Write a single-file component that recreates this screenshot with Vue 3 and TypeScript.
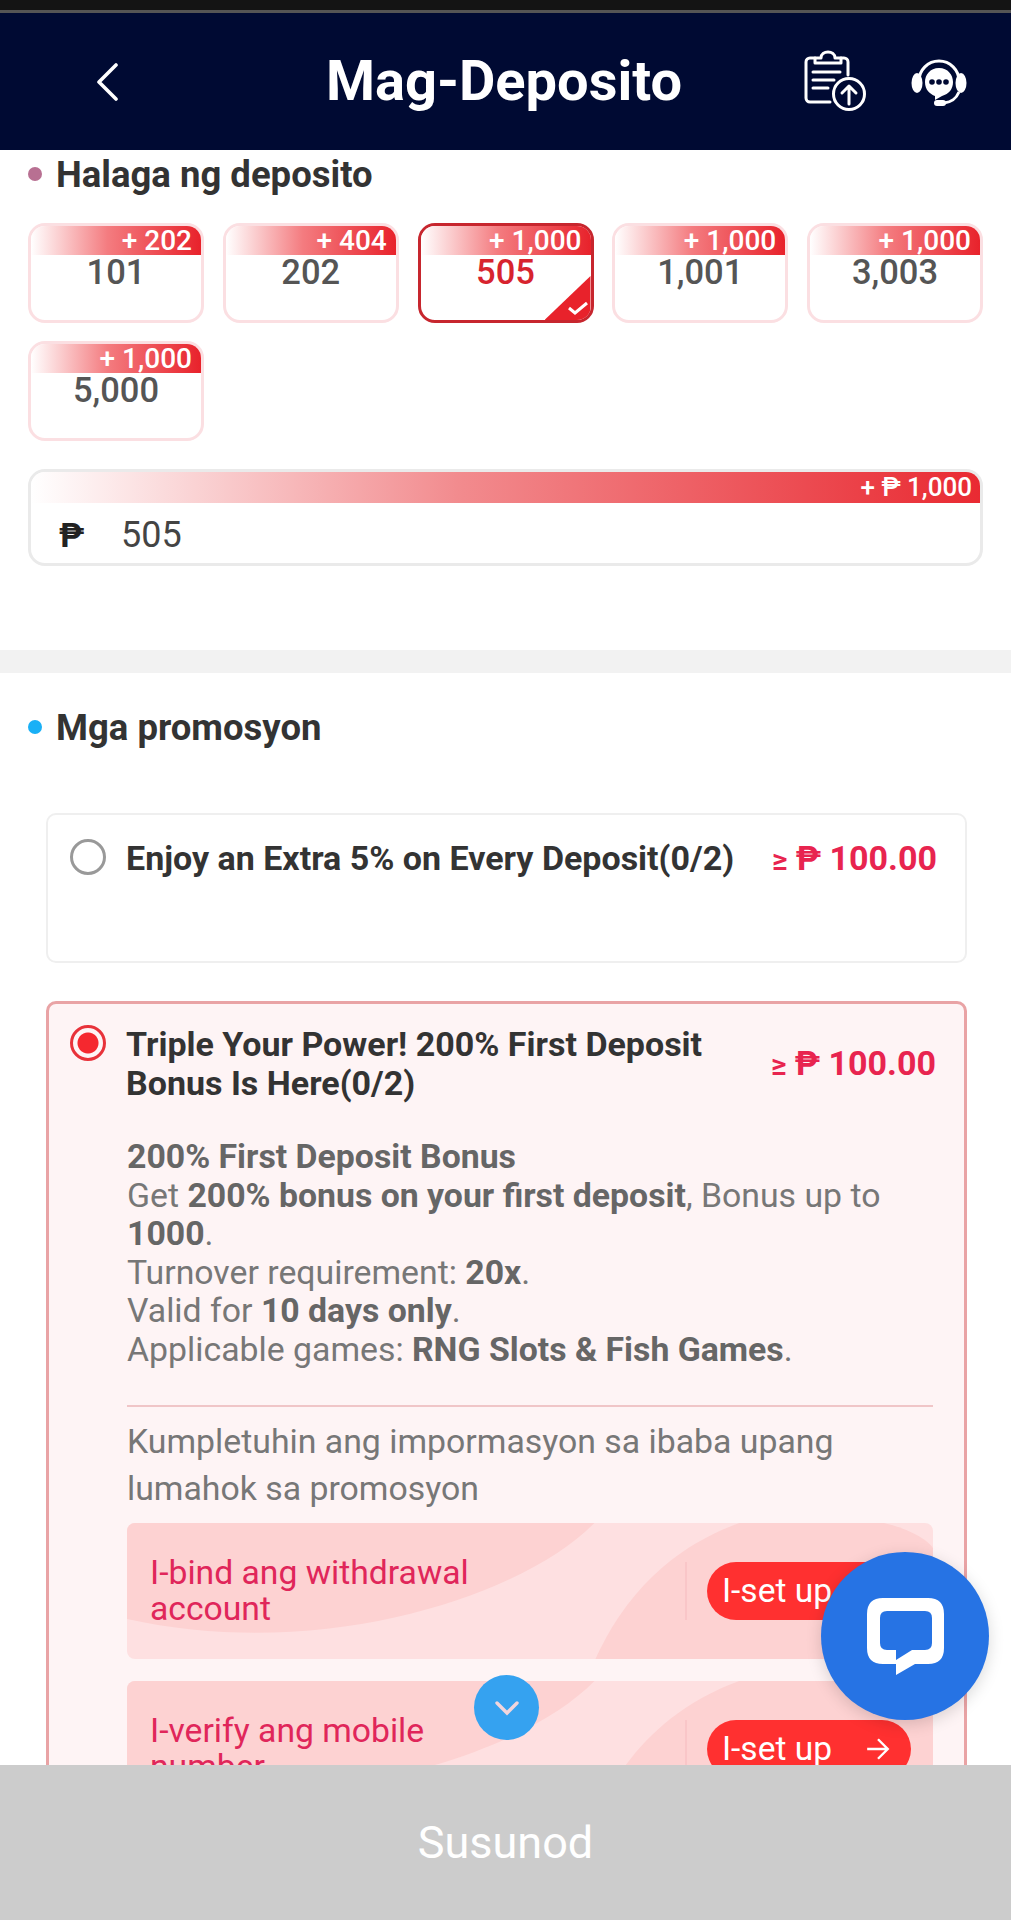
<script setup lang="ts">
interface Chip {
  amount: string
  bonus: string
  active?: boolean
}

const chips: Chip[] = [
  { amount: '101', bonus: '+ 202' },
  { amount: '202', bonus: '+ 404' },
  { amount: '505', bonus: '+ 1,000', active: true },
  { amount: '1,001', bonus: '+ 1,000' },
  { amount: '3,003', bonus: '+ 1,000' },
  { amount: '5,000', bonus: '+ 1,000' }
]

const tasks = [
  { label: 'I-bind ang withdrawal account' },
  { label: 'I-verify ang mobile number' }
]
</script>

<template>
  <div class="page">
    <div class="status"></div>
    <header class="top">
      <div class="top-left">
        <svg class="back" width="24" height="38" viewBox="0 0 24 38" fill="none">
          <path d="M21 2 L4 19 L21 36" stroke="#fff" stroke-width="3.6" stroke-linecap="round" stroke-linejoin="round" />
        </svg>
      </div>
      <h1 class="title">Mag-Deposito</h1>
      <div class="top-right">
        <svg class="clip-icon" width="66" height="64" viewBox="0 0 66 64" fill="none" stroke="#fff" stroke-width="3" stroke-linecap="round" stroke-linejoin="round">
          <path d="M12 10 H7 a4 4 0 0 0 -4 4 V50 a4 4 0 0 0 4 4 H27" />
          <path d="M38 10 H41 a4 4 0 0 1 4 4 V27" />
          <path d="M12 15 V10 H18 C18 2 32 2 32 10 H38 V15 Z" />
          <path d="M10 24 H37 M10 32 H31 M10 40 H25" />
          <circle cx="46" cy="46" r="15.5" />
          <path d="M46 56 V38 M39 45 L46 38 L53 45" />
        </svg>
        <svg width="56" height="50" viewBox="0 0 56 50" fill="none">
          <path d="M8 24 a20 20 0 0 1 40 0" stroke="#fff" stroke-width="3" />
          <ellipse cx="6" cy="26" rx="5.5" ry="10" fill="#fff" />
          <ellipse cx="50" cy="26" rx="5.5" ry="10" fill="#fff" />
          <path d="M28 11 C19 11 14 18 14 25 C14 33 19 37 24 39 V43 L31 39 C38 37 42 32 42 25 C42 18 37 11 28 11 Z" fill="#fff" />
          <circle cx="21" cy="25" r="2.8" fill="#000a33" />
          <circle cx="28" cy="25" r="2.8" fill="#000a33" />
          <circle cx="35" cy="25" r="2.8" fill="#000a33" />
          <path d="M48 35 C45 42 41 45 33 46" stroke="#fff" stroke-width="3" />
          <rect x="23" y="43" width="12" height="6" rx="3" fill="#fff" />
        </svg>
      </div>
    </header>

    <main class="content">
      <section class="amounts">
        <h2 class="sec-title"><i class="dot dot-rose"></i>Halaga ng deposito</h2>
        <div class="chips">
          <div v-for="chip in chips" :key="chip.amount" class="chip" :class="{ active: chip.active }">
            <div class="strip">{{ chip.bonus }}</div>
            <div class="chip-amount">{{ chip.amount }}</div>
            <div v-if="chip.active" class="corner">
              <svg width="20" height="14" viewBox="0 0 20 14" fill="none">
                <path d="M1 7 L7 12 L19 2" stroke="#fff" stroke-width="3" />
              </svg>
            </div>
          </div>
        </div>
        <div class="input-box">
          <div class="strip strip-wide">+ ₱ 1,000</div>
          <div class="input-row">
            <span class="peso">₱</span>
            <span class="input-val">505</span>
          </div>
        </div>
      </section>

      <div class="band"></div>

      <section class="promos">
        <h2 class="sec-title"><i class="dot dot-blue"></i>Mga promosyon</h2>

        <div class="card card-plain">
          <div class="card-head">
            <span class="radio"></span>
            <div class="card-name">Enjoy an Extra 5% on Every Deposit(0/2)</div>
            <div class="card-min"><small>≥</small> ₱ 100.00</div>
          </div>
        </div>

        <div class="card card-on">
          <div class="card-head">
            <span class="radio radio-on"></span>
            <div class="card-name">Triple Your Power! 200% First Deposit Bonus Is Here(0/2)</div>
            <div class="card-min card-min-mid"><small>≥</small> ₱ 100.00</div>
          </div>

          <div class="card-body">
            <div class="desc">
              <strong>200% First Deposit Bonus</strong><br />
              Get <strong>200% bonus on your first deposit</strong>, Bonus up to <strong>1000</strong>.<br />
              Turnover requirement: <strong>20x</strong>.<br />
              Valid for <strong>10 days only</strong>.<br />
              Applicable games: <strong>RNG Slots &amp; Fish Games</strong>.
            </div>
            <div class="rule"></div>
            <p class="hint">Kumpletuhin ang impormasyon sa ibaba upang lumahok sa promosyon</p>

            <div v-for="task in tasks" :key="task.label" class="task">
              <svg class="task-bg" viewBox="0 0 807 136" preserveAspectRatio="none">
                <path d="M0 0 H468 C400 70 200 140 0 96 Z" fill="#fdd2d2" />
                <path d="M469 136 C490 90 530 30 613 0 H758 C780 5 800 15 807 25 V136 Z" fill="#fdd2d2" />
              </svg>
              <div class="task-label">{{ task.label }}</div>
              <div class="task-action">
                <div class="set-btn">
                  <span>I-set up</span>
                  <svg width="26" height="26" viewBox="0 0 24 24" fill="none">
                    <path d="M2 12 H21 M12 3 L21 12 L12 21" stroke="#fff" stroke-width="2.2" />
                  </svg>
                </div>
              </div>
            </div>
          </div>
        </div>
      </section>
    </main>

    <footer class="next">Susunod</footer>

    <div class="scroll-btn">
      <svg width="26" height="16" viewBox="0 0 26 16" fill="none">
        <path d="M3 3 L13 13 L23 3" stroke="#f1d5dc" stroke-width="3.4" stroke-linecap="round" />
      </svg>
    </div>

    <div class="chat-btn">
      <svg width="77" height="77" viewBox="0 0 77 77">
        <path fill="#fff" fill-rule="evenodd" d="M16 0 H61 Q77 0 77 16 V50 Q77 66 61 66 H48 L29 77 V66 H16 Q0 66 0 50 V16 Q0 0 16 0 Z M20 13 Q13 13 13 20 V45 Q13 52 20 52 H29 V62 L45 52 H58 Q65 52 65 45 V20 Q65 13 58 13 Z" />
      </svg>
    </div>
  </div>
</template>

<style>
body {
  background: #fff;
}
</style>

<style scoped>
.page {
  position: relative;
  width: 1011px;
  height: 1920px;
  display: flex;
  flex-direction: column;
  overflow: hidden;
  background: #fff;
  font-family: Roboto, "Noto Sans", sans-serif;
}

.status {
  height: 10px;
  flex: none;
  background: #141414;
  border-bottom: 3px solid #555;
}

.top {
  flex: none;
  height: 137px;
  display: grid;
  grid-template-columns: 1fr auto 1fr;
  align-items: center;
  background: #000a33;
}

.top-left {
  padding-left: 95px;
  display: flex;
}

.title {
  margin: 0 3px 2px 0;
  color: #fff;
  font-size: 56px;
  font-weight: 700;
}

.top-right {
  display: flex;
  justify-content: flex-end;
  align-items: center;
  gap: 42px;
  padding-right: 44px;
}

.clip-icon {
  margin-top: -4px;
}

.content {
  flex: 1;
  min-height: 0;
  overflow: hidden;
}

.amounts {
  padding: 4px 28px 84px 28px;
}

.sec-title {
  margin: 0;
  display: flex;
  align-items: center;
  gap: 14px;
  height: 40px;
  font-size: 36.5px;
  font-weight: 700;
  color: #333;
}

.dot {
  width: 14px;
  height: 14px;
  border-radius: 50%;
}

.dot-rose {
  background: #b87092;
}

.dot-blue {
  background: #19b0f6;
}

.chips {
  margin-top: 29px;
  display: grid;
  grid-template-columns: repeat(5, 176px);
  justify-content: space-between;
  row-gap: 18px;
}

.chip {
  position: relative;
  height: 100px;
  box-sizing: border-box;
  border: 3px solid #fbdfe2;
  border-radius: 17px;
  overflow: hidden;
  background: #fff;
  text-align: center;
}

.chip.active {
  border-color: #c7262e;
}

.strip {
  height: 29px;
  padding-right: 9px;
  text-align: right;
  line-height: 29px;
  font-size: 28px;
  font-weight: 500;
  color: #fff;
  background: linear-gradient(90deg, #fff 0%, #f47c80 45%, #e8222b 100%);
}

.chip-amount {
  margin-top: -1px;
  line-height: 36px;
  font-size: 34.5px;
  font-weight: 500;
  color: #555;
}

.chip.active .chip-amount {
  color: #d7232e;
}

.corner {
  position: absolute;
  right: 0;
  bottom: 0;
  width: 46px;
  height: 44px;
  display: flex;
  align-items: flex-end;
  justify-content: flex-end;
  padding: 0 3px 5px 0;
  box-sizing: border-box;
  background: #e8222b;
  clip-path: polygon(100% 0, 100% 100%, 0 100%);
}

.input-box {
  margin-top: 28px;
  height: 97px;
  box-sizing: border-box;
  border: 3px solid #eaeaea;
  border-radius: 17px;
  overflow: hidden;
}

.strip-wide {
  height: 31px;
  line-height: 31px;
  padding-right: 8px;
  font-size: 26px;
  background: linear-gradient(90deg, #fff 0%, #f28b8e 45%, #e92a32 100%);
}

.input-row {
  display: flex;
  align-items: center;
  height: 64px;
  padding-left: 28px;
}

.peso {
  width: 62px;
  font-size: 34px;
  font-weight: 700;
  color: #222;
}

.input-val {
  font-size: 36px;
  color: #444;
}

.band {
  height: 23px;
  background: #f2f2f2;
}

.promos {
  padding: 34px 44px 0 46px;
}

.promos .sec-title {
  margin-left: -18px;
}

.card {
  box-sizing: border-box;
  border-radius: 10px;
}

.card-plain {
  margin-top: 66px;
  height: 150px;
  border: 2px solid #efefef;
}

.card-on {
  margin-top: 38px;
  border: 3px solid #e9a3a5;
  background: #fef4f5;
}

.card-head {
  display: flex;
  align-items: flex-start;
  padding: 24px 28px 0 22px;
}

.card-on .card-head {
  padding: 21px 28px 0 21px;
}

.radio {
  flex: none;
  width: 36px;
  height: 36px;
  box-sizing: border-box;
  border: 3px solid #999;
  border-radius: 50%;
  margin-right: 20px;
}

.radio-on {
  border-color: #e8323a;
  background: radial-gradient(circle, #f5282f 0 10px, transparent 11px);
}

.card-name {
  flex: 1;
  font-size: 34px;
  line-height: 39px;
  font-weight: 700;
  color: #333;
}

.card-on .card-name {
  padding-right: 40px;
}

.card-min {
  flex: none;
  font-size: 34px;
  line-height: 39px;
  font-weight: 700;
  color: #e8244f;
  white-space: nowrap;
}

.card-min small {
  font-size: 30px;
}

.card-min-mid {
  align-self: center;
}

.card-body {
  padding: 35px 31px 0 78px;
}

.desc {
  font-size: 33.8px;
  line-height: 38.6px;
  color: #777;
}

.desc strong {
  font-weight: 700;
  color: #666;
}

.rule {
  height: 2px;
  margin-top: 35px;
  background: #f0c5c7;
}

.hint {
  margin: 11px 0 0;
  font-size: 33.8px;
  line-height: 47px;
  color: #777;
}

.task {
  position: relative;
  height: 136px;
  margin-top: 11px;
  display: flex;
  align-items: center;
  border-radius: 8px;
  overflow: hidden;
  background: #fee0e1;
}

.task + .task {
  margin-top: 22px;
}

.task-bg {
  position: absolute;
  inset: 0;
  width: 100%;
  height: 100%;
}

.task-label {
  position: relative;
  width: 380px;
  padding-left: 23px;
  font-size: 33.7px;
  line-height: 36px;
  color: #e0265a;
}

.task-action {
  position: relative;
  margin-left: auto;
  padding-left: 20px;
  margin-right: 22px;
  border-left: 2px solid #f9c6c8;
}

.set-btn {
  width: 204px;
  height: 58px;
  box-sizing: border-box;
  padding: 0 20px 0 15px;
  display: flex;
  align-items: center;
  justify-content: space-between;
  border-radius: 29px;
  background: #ff3030;
  font-size: 33.5px;
  color: #fff;
}

.next {
  flex: none;
  height: 155px;
  display: flex;
  align-items: center;
  justify-content: center;
  background: #ccc;
  color: #fff;
  font-size: 45px;
  position: relative;
  z-index: 1;
}

.scroll-btn {
  position: absolute;
  left: 474px;
  top: 1675px;
  width: 65px;
  height: 65px;
  display: flex;
  align-items: center;
  justify-content: center;
  border-radius: 50%;
  background: #35a2f0;
}

.chat-btn {
  position: absolute;
  left: 821px;
  top: 1552px;
  width: 168px;
  height: 168px;
  display: flex;
  align-items: center;
  justify-content: center;
  border-radius: 50%;
  background: #2673e4;
  box-shadow: 0 4px 16px rgba(0, 0, 0, 0.15);
}
</style>
